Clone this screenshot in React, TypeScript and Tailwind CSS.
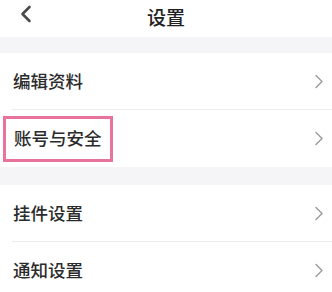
import React from 'react';

const Chevron: React.FC = () => (
  <svg width="10" height="15" viewBox="0 0 10 15" fill="none">
    <path d="M2 1.5 L8 7.5 L2 13.5" stroke="#9a9a9a" strokeWidth="1.4" strokeLinecap="round" strokeLinejoin="round" />
  </svg>
);

type Row = { label: string; highlight?: boolean };

const groups: Row[][] = [
  [{ label: '编辑资料' }, { label: '账号与安全', highlight: true }],
  [{ label: '挂件设置' }, { label: '通知设置' }],
];

export default function App() {
  return (
    <div
      className="w-[332px] h-[292px] overflow-hidden bg-[#f5f5f7]"
      style={{ fontFamily: '"Noto Sans CJK SC", "Noto Sans", sans-serif' }}
    >
      {/* Header */}
      <div className="relative h-[37px] bg-white flex items-center justify-center">
        <button className="absolute left-[19px] top-[5px] p-0">
          <svg width="14" height="18" viewBox="0 0 14 18" fill="none">
            <path d="M10.5 2 L3.5 9 L10.5 16" stroke="#4a4a4a" strokeWidth="2.6" strokeLinecap="round" strokeLinejoin="round" />
          </svg>
        </button>
        <span className="text-[19px] font-medium text-[#222] leading-none -mt-[4px]">设置</span>
      </div>

      {groups.map((group, gi) => (
        <div key={gi} className={gi === 0 ? 'mt-[16px]' : 'mt-[18px]'}>
          {group.map((row, ri) => (
            <div key={row.label} className="bg-white">
              <div
                className={
                  'h-[57px] flex items-center justify-between pr-[8px] ml-[12px] ' +
                  (ri < group.length - 1 ? 'border-b border-[#ececec]' : '')
                }
              >
                {row.highlight ? (
                  <span className="-ml-[9px] px-[8px] h-[46px] flex items-center border-[3px] border-[#e8739c] text-[17.5px] font-medium text-[#2b2b2b]">
                    {row.label}
                  </span>
                ) : (
                  <span className="ml-[1px] text-[17.5px] font-medium text-[#2b2b2b]">{row.label}</span>
                )}
                <Chevron />
              </div>
            </div>
          ))}
        </div>
      ))}
    </div>
  );
}
